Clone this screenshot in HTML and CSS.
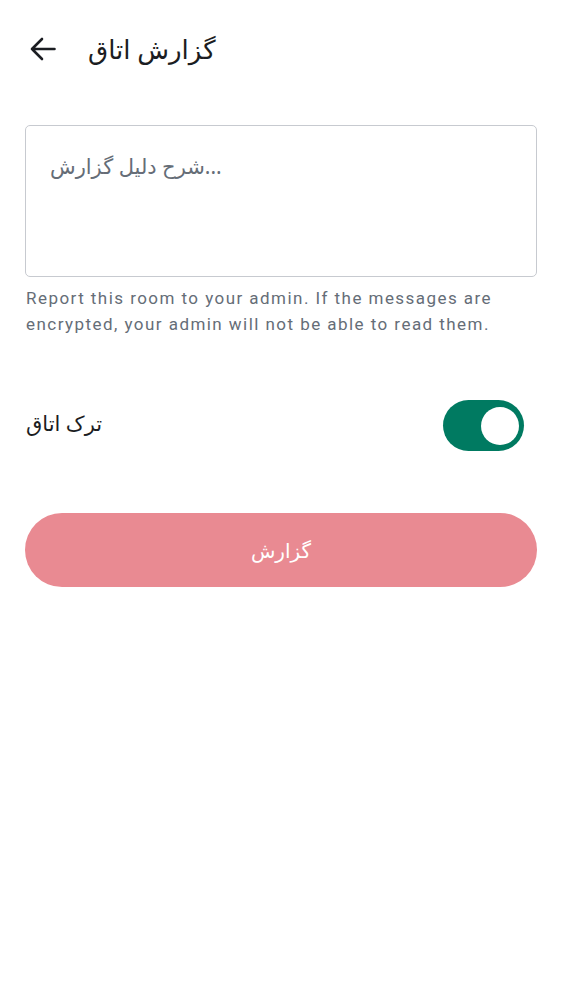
FILE: index.html
```html
<!DOCTYPE html>
<html lang="fa">
<head>
<meta charset="utf-8">
<link rel="stylesheet" href="styles.css">
</head>
<body>
<div class="screen">
  <header class="topbar">
    <span class="back" aria-label="back">
      <svg width="26" height="24" viewBox="0 0 26 24"><path d="M24.5 12H2 M12 2L2 12l10 10" fill="none" stroke="#1b1d22" stroke-width="2.6" stroke-linecap="round" stroke-linejoin="round"/></svg>
    </span>
    <h1 class="title" dir="rtl">گزارش اتاق</h1>
  </header>
  <div class="field">
    <div class="textarea"><span class="placeholder">شرح دلیل گزارش...</span></div>
    <p class="help">Report this room to your admin. If the messages are encrypted, your admin will not be able to read them.</p>
  </div>
  <div class="row">
    <span class="label" dir="rtl">ترک اتاق</span>
    <span class="switch"><span class="knob"></span></span>
  </div>
  <button class="btn" dir="rtl">گزارش</button>
</div>
</body>
</html>
```
FILE: styles.css
```css
html, body { margin: 0; padding: 0; background: #fff; }
body { font-family: "Noto Sans", "DejaVu Sans", sans-serif; color: #1b1d22; }
.screen { width: 562px; padding: 0 25px; box-sizing: border-box; }
.topbar { height: 98px; display: flex; align-items: center; gap: 32px; padding-left: 5px; }
.back { display: flex; width: 26px; height: 24px; }
.title { margin: 0; font-size: 26px; font-weight: 400; line-height: 32px; }
.field { padding-top: 27px; }
.textarea { height: 152px; border: 1px solid #c7cad0; border-radius: 5px; padding: 27px 24px 0; box-sizing: border-box; text-align: left; }
.placeholder { font-size: 21px; color: #656d77; line-height: 26px; }
.help { margin: 8px 0 0 1px; font-family: Roboto, "Noto Sans", sans-serif; font-size: 17px; line-height: 26px; color: #656d77; letter-spacing: 1.45px; }
.row { display: flex; align-items: center; justify-content: space-between; margin-top: 63px; padding: 0 13px 0 1px; }
.label { font-size: 21px; line-height: 30px; margin-bottom: 6px; }
.switch { width: 81px; height: 51px; border-radius: 26px; background: #007a61; display: flex; align-items: center; justify-content: flex-end; padding-right: 5px; box-sizing: border-box; }
.knob { width: 38px; height: 38px; border-radius: 50%; background: #fff; }
.btn { display: block; width: 512px; height: 74px; margin-top: 62px; border: 0; border-radius: 37px; background: #e98a92; color: #fff; font-family: "Noto Sans", "DejaVu Sans", sans-serif; font-size: 20px; }
```
